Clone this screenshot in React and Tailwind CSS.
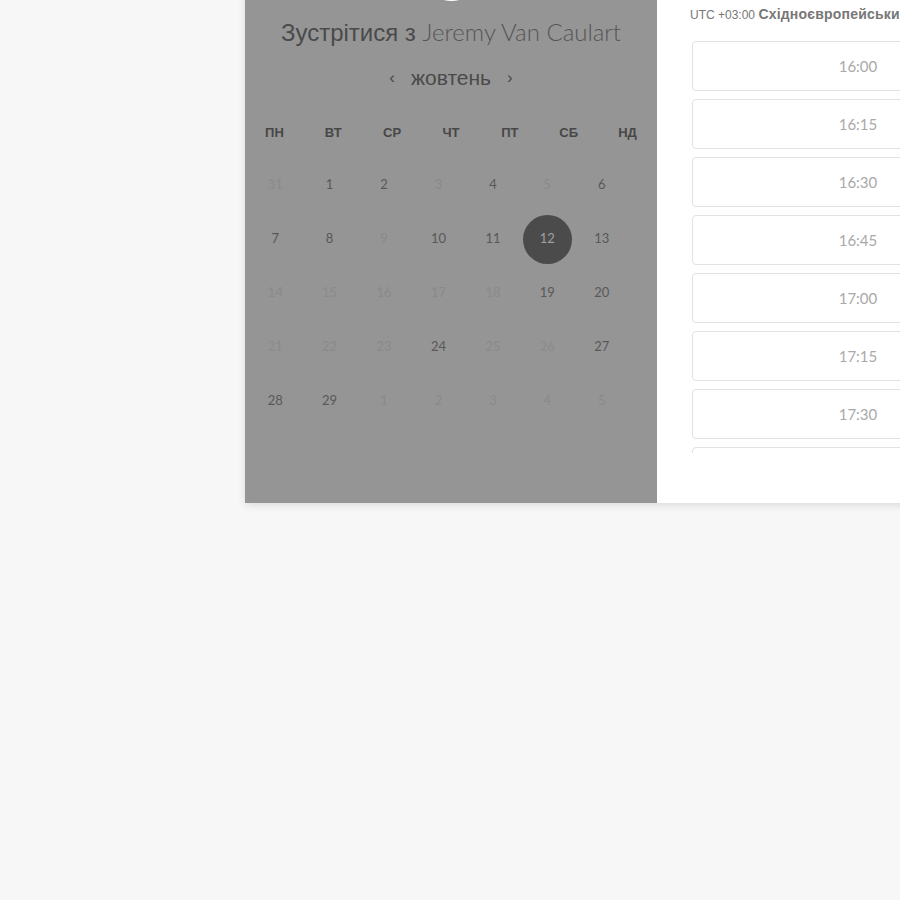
const DNI = ["ПН", "ВТ", "СР", "ЧТ", "ПТ", "СБ", "НД"];

// [число, доступний?, вибраний?]
const TYZHNI = [
  [[31, false], [1, true], [2, true], [3, false], [4, true], [5, false], [6, true]],
  [[7, true], [8, true], [9, false], [10, true], [11, true], [12, true, "sel"], [13, true]],
  [[14, false], [15, false], [16, false], [17, false], [18, false], [19, true], [20, true]],
  [[21, false], [22, false], [23, false], [24, true], [25, false], [26, false], [27, true]],
  [[28, true], [29, true], [1, false], [2, false], [3, false], [4, false], [5, false]],
];

const SLOTY = ["16:00", "16:15", "16:30", "16:45", "17:00", "17:15", "17:30", "17:45"];

function Den({ n, dostupnyi, stan }) {
  if (stan === "sel") {
    return (
      <div className="flex h-[54px] items-center justify-center">
        <div className="flex h-[49px] w-[49px] items-center justify-center rounded-full bg-[#4b4b4b] text-[13px] text-[#a0a0a0]">
          {n}
        </div>
      </div>
    );
  }
  return (
    <div
      className={`flex h-[54px] items-center justify-center text-[13px] ${
        dostupnyi ? "text-[#585858]" : "text-[#8a8a8a]"
      }`}
    >
      {n}
    </div>
  );
}

export default function App() {
  return (
    <div className="min-h-screen overflow-hidden bg-[#f7f7f7] font-['Lato',sans-serif]">
      <div className="-mt-[80px] ml-[245px] flex w-[814px] shadow-[0_2px_8px_rgba(0,0,0,0.12)]">
        {/* Ліва панель — календар */}
        <div className="w-[412px] shrink-0 bg-[#959595] pt-[20px]">
          <div className="mx-auto h-[61px] w-[61px] rounded-full bg-white" />

          <h1 className="mt-[16px] whitespace-nowrap text-center text-[24px] leading-[30px] text-[#4a4a4a]">
            <span className="font-['Liberation_Sans',sans-serif]">Зустрітися з </span>
            <span className="font-light text-[#555]">Jeremy Van Caulart</span>
          </h1>

          <div className="mt-[18px] flex h-[24px] items-center justify-center font-['Liberation_Sans',sans-serif] text-[#4a4a4a]">
            <span className="text-[17px]">‹</span>
            <span className="mx-[16px] text-[21px]">жовтень</span>
            <span className="text-[17px]">›</span>
          </div>

          <div className="mt-[35px] grid grid-cols-7 font-['Liberation_Sans',sans-serif] text-[13px] font-bold leading-[16px] text-[#474747]">
            {DNI.map(d => (
              <div key={d} className="text-center">{d}</div>
            ))}
          </div>

          <div className="ml-[3px] mt-[17px] grid w-[381px] grid-cols-7">
            {TYZHNI.flat().map(([n, dostupnyi, stan], i) => (
              <Den key={i} n={n} dostupnyi={dostupnyi} stan={stan} />
            ))}
          </div>
        </div>

        {/* Права панель — слоти */}
        <div className="w-[402px] shrink-0 bg-white px-[35px] pb-[50px] pt-[87px]">
          <div className="-ml-[2px] h-[16px] whitespace-nowrap font-['Liberation_Sans',sans-serif] text-[12px] leading-[16px] text-[#777]">
            UTC +03:00 <span className="text-[14px] font-bold leading-none tracking-[0.2px]">Східноєвропейський час</span>
          </div>
          <div className="mt-[18px] flex h-[412px] flex-col gap-[8px] overflow-hidden">
            {SLOTY.map(s => (
              <button
                key={s}
                type="button"
                className="h-[50px] w-[332px] shrink-0 rounded-[4px] border border-[#e2e2e2] bg-white text-[15px] text-[#a9a9a9]"
              >
                {s}
              </button>
            ))}
          </div>
        </div>
      </div>
    </div>
  );
}
